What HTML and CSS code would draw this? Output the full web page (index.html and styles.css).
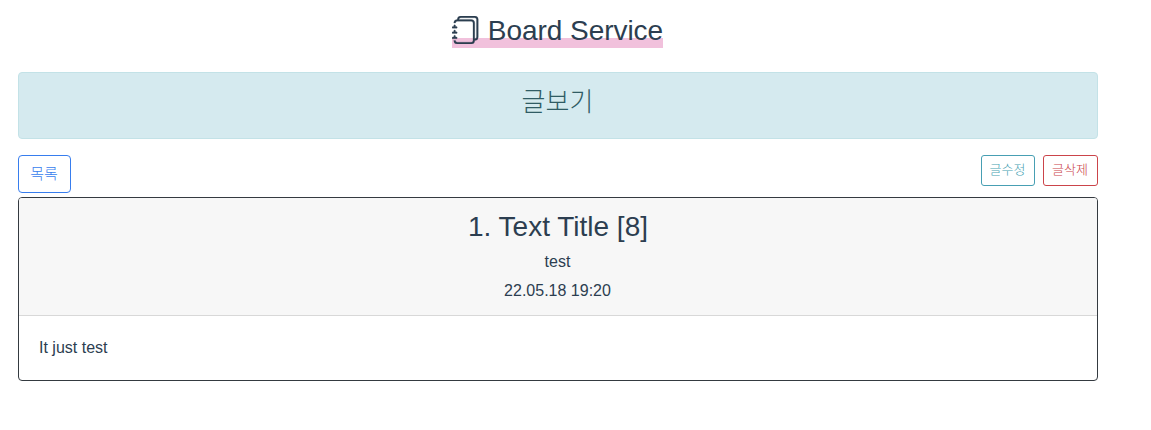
FILE: index.html
```html
<!DOCTYPE html>
<html lang="ko">
<head>
<meta charset="utf-8">
<title>Board Service</title>
<link rel="stylesheet" href="styles.css">
</head>
<body>
<main class="container">
  <header class="brand">
    <h3 class="brand-title"><svg class="brand-icon" viewBox="0 0 16 16" fill="currentColor" aria-hidden="true"><path d="M5 0h8a2 2 0 0 1 2 2v10a2 2 0 0 1-2 2 2 2 0 0 1-2 2H3a2 2 0 0 1-2-2h1a1 1 0 0 0 1 1h8a1 1 0 0 0 1-1V4a1 1 0 0 0-1-1H3a1 1 0 0 0-1 1H1a2 2 0 0 1 2-2h8a2 2 0 0 1 2 2v9a1 1 0 0 0 1-1V2a1 1 0 0 0-1-1H5a1 1 0 0 0-1 1H3a2 2 0 0 1 2-2z"/><path d="M1 6v-.5a.5.5 0 0 1 1 0V6h.5a.5.5 0 0 1 0 1h-2a.5.5 0 0 1 0-1H1zm0 3v-.5a.5.5 0 0 1 1 0V9h.5a.5.5 0 0 1 0 1h-2a.5.5 0 0 1 0-1H1zm0 2.5v.5H.5a.5.5 0 0 0 0 1h2a.5.5 0 0 0 0-1H2v-.5a.5.5 0 0 0-1 0z"/></svg> Board Service</h3>
  </header>
  <div class="alert"><h3 class="alert-title">글보기</h3></div>
  <div class="toolbar">
    <button class="btn btn-primary">목록</button>
    <div class="actions">
      <button class="btn btn-sm btn-info">글수정</button>
      <button class="btn btn-sm btn-danger">글삭제</button>
    </div>
  </div>
  <article class="card">
    <header class="card-header">
      <h3 class="card-title">1. Text Title [8]</h3>
      <div class="meta">test</div>
      <div class="meta">22.05.18 19:20</div>
    </header>
    <div class="card-body">It just test</div>
  </article>
</main>
</body>
</html>
```

FILE: styles.css
```css
* { box-sizing: border-box; }
body {
  margin: 0;
  font: 16px/24px "Liberation Sans", "Noto Sans CJK KR", sans-serif;
  color: #2c3e50;
  background: #fff;
}
h3 { margin: 0; font-size: 28px; line-height: 34px; font-weight: 400; }
.container { width: 1080px; margin-left: 18px; padding-top: 14px; }
.brand { display: flex; justify-content: center; height: 58px; }
.brand-title {
  width: 211px;
  height: 34px;
  margin-right: 1px;
  white-space: nowrap;
  letter-spacing: -0.04px;
  background: linear-gradient(to top, #f1c1dc 10px, transparent 10px);
}
.brand-icon {
  width: 28px;
  height: 28px;
  vertical-align: -4px;
  stroke: currentColor;
  stroke-width: 0.15;
}
.alert {
  height: 67px;
  padding-top: 12px;
  text-align: center;
  color: #305c64;
  background: #d5eaef;
  border: 1px solid #c3e2e7;
  border-radius: 4px;
}
.alert-title { padding-right: 1px; font-size: 26px; font-weight: 300; }
.toolbar {
  display: flex;
  justify-content: space-between;
  align-items: flex-start;
  height: 58px;
  padding-top: 16px;
}
.actions { display: flex; gap: 8px; }
.btn {
  width: 53px;
  height: 38px;
  padding: 0 1px 2px 0;
  font: 300 15px/24px "Noto Sans CJK KR", sans-serif;
  background: #fff;
  border: 1px solid currentColor;
  border-radius: 4px;
}
.btn-sm { width: 54px; height: 31px; padding-bottom: 3px; font-size: 13px; line-height: 20px; border-radius: 3px; }
.btn-primary { color: #377dee; }
.btn-info { color: #479fb3; }
.btn-danger { width: 55px; color: #cb444a; }
.card { border: 1px solid #343a40; border-radius: 4px; overflow: hidden; height: 184px; }
.card-header {
  height: 118px;
  padding-top: 12px;
  text-align: center;
  background: #f7f7f7;
  border-bottom: 1px solid #d8d8d8;
}
.card-title { margin-bottom: 6px; }
.meta { margin-bottom: 5px; padding-right: 1px; }
.card-body { padding: 20px; }
```
